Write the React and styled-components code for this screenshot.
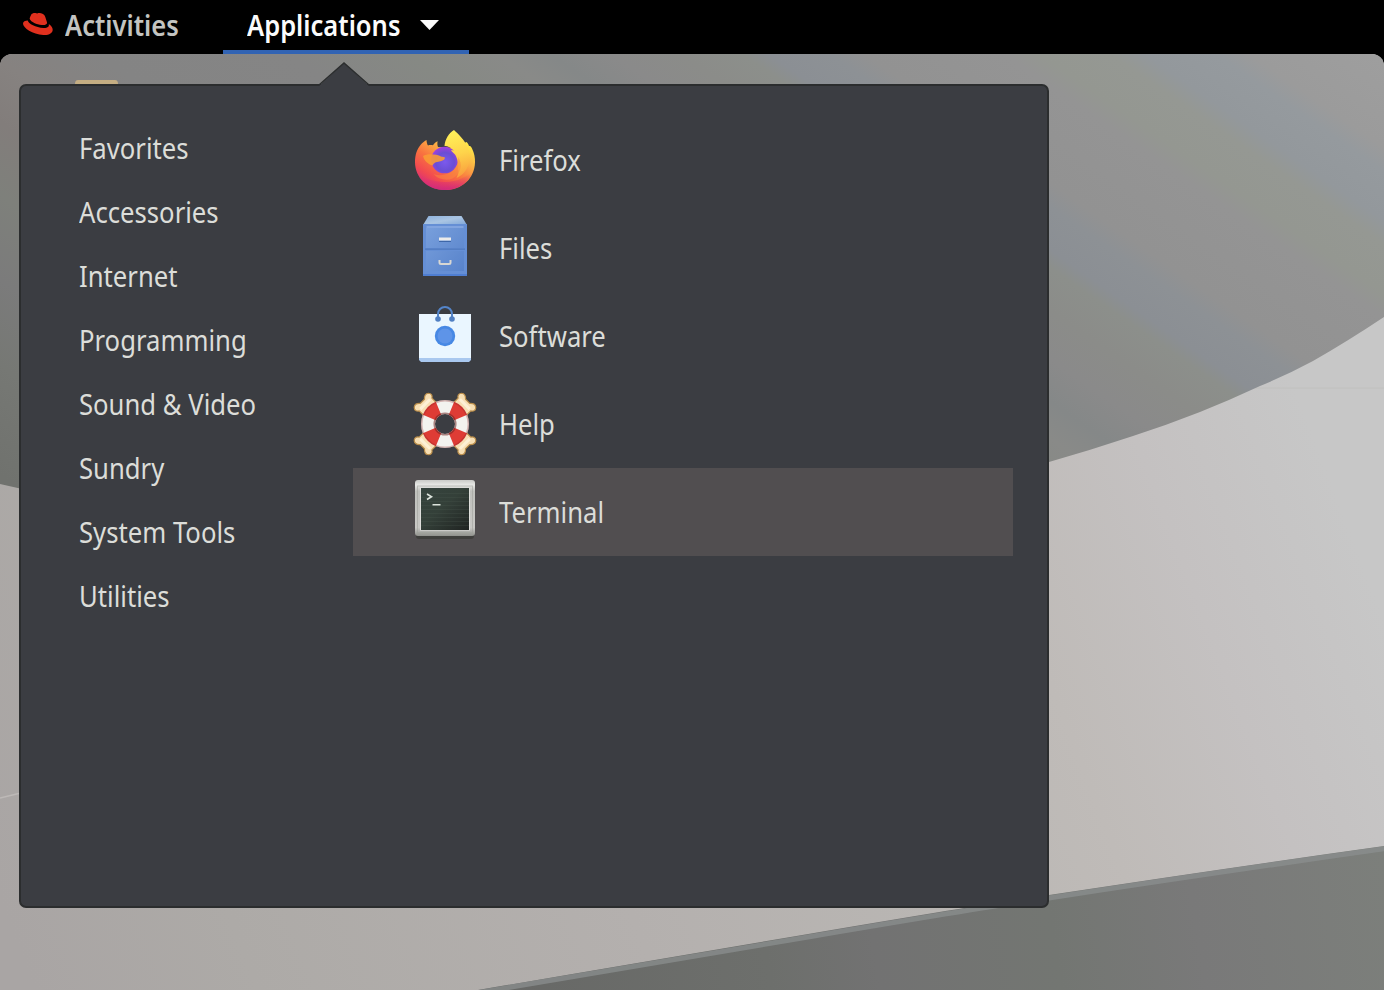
import React from "react";
import styled, { createGlobalStyle } from "styled-components";

const GlobalStyle = createGlobalStyle`
  * { box-sizing: border-box; }
  body { margin: 0; background: #000; overflow: hidden; }
`;

const Screen = styled.div`
  width: 1384px;
  height: 990px;
  display: flex;
  flex-direction: column;
  background: #000;
  font-family: "Noto Sans", "Open Sans", sans-serif;
  overflow: hidden;
`;

const TopBar = styled.header`
  height: 54px;
  flex: none;
  display: flex;
  align-items: stretch;
  background: #000;
`;

const BarButton = styled.div`
  display: flex;
  align-items: center;
  width: ${(p) => p.$width}px;
  padding-left: ${(p) => p.$inset}px;
  padding-bottom: ${(p) => (p.$active ? 0 : 4)}px;
  color: ${(p) => (p.$active ? "#fbfbfb" : "#c3c4c1")};
  border-bottom: ${(p) => (p.$active ? "4px solid #3163b3" : "none")};
`;

const Label = styled.span`
  display: block;
  flex: none;
  white-space: nowrap;
  width: ${(p) => (p.$width ? `${p.$width}px` : "auto")};
  font-size: ${(p) => p.$size || 29}px;
  font-weight: ${(p) => p.$weight || 400};
  line-height: 40px;
  transform: scaleX(${(p) => p.$scale || 0.885});
  transform-origin: 0 50%;
`;

const Desktop = styled.main`
  position: relative;
  flex: 1;
  border-radius: 12px 12px 0 0;
  overflow: hidden;
  padding: 30px 0 0 19px;
`;

const Wallpaper = styled.svg`
  position: absolute;
  inset: 0;
`;

const Pointer = styled.svg`
  position: absolute;
  left: 318px;
  top: 7px;
  z-index: 2;
`;

const Menu = styled.section`
  position: relative;
  width: 1030px;
  height: 824px;
  display: flex;
  padding: 30px 34px 0 32px;
  background: #3b3d42;
  border: 2px solid #2b2d2e;
  border-radius: 7px;
  color: #dcddd9;
`;

const Categories = styled.nav`
  width: 300px;
  display: flex;
  flex-direction: column;
`;

const Category = styled.div`
  height: 64px;
  display: flex;
  align-items: center;
  padding-left: 26px;
`;

const AppList = styled.div`
  width: 660px;
  display: flex;
  flex-direction: column;
`;

const AppRow = styled.div`
  height: 88px;
  display: flex;
  align-items: center;
  gap: 22px;
  padding-left: 60px;
  background: ${(p) => (p.$selected ? "#514e50" : "transparent")};
`;

const Icon = styled.svg`
  flex: none;
  display: block;
`;

function RedHat() {
  return (
    <Icon width="32" height="26" viewBox="0 0 32 26">
      <path fill="#e0301e" d="M9.4 2.3C10.3 1.2 12 .6 13.4 1c1.100.3 1.700.8 3 .1 1.900-.7 5 .5 6.200 2.400 1 1.700 1.600 4.500 2.400 6.700.6 2-1.800 3.100-5.300 2.800C14.600 12.500 9 9.900 7.700 6.900c-.2-.7 1-3.400 1.700-4.600z" />
      <path fill="#e0301e" d="M5.800 8.600C3.200 8.700 1 9.600 1 11.800c0 4 9.600 10.600 20.300 11.200 6 .3 9.200-2 9.400-5 .1-2.200-1.500-4.300-4-6 .9 2.500-1 4.200-5.400 4C14 15.700 6.200 12 5.800 8.600z" />
    </Icon>
  );
}

function Firefox() {
  return (
    <Icon width="64" height="64" viewBox="0 0 64 64">
      <defs>
        <linearGradient id="ffBody" x1="50" y1="10" x2="17" y2="60" gradientUnits="userSpaceOnUse">
          <stop offset="0" stopColor="#fff04a" />
          <stop offset=".3" stopColor="#fbb544" />
          <stop offset=".58" stopColor="#f9733f" />
          <stop offset=".82" stopColor="#f24a50" />
          <stop offset="1" stopColor="#d92f78" />
        </linearGradient>
        <linearGradient id="ffBase" x1="0" y1="46" x2="0" y2="62" gradientUnits="userSpaceOnUse">
          <stop offset="0" stopColor="#e7346c" stopOpacity="0" />
          <stop offset="1" stopColor="#cf2a7c" />
        </linearGradient>
        <radialGradient id="ffGlobe" cx="32" cy="34" r="17" gradientUnits="userSpaceOnUse">
          <stop offset="0" stopColor="#7b59ee" />
          <stop offset=".55" stopColor="#6a4ed4" />
          <stop offset="1" stopColor="#b43be0" />
        </radialGradient>
        <linearGradient id="ffFlame" x1="38" y1="2" x2="50" y2="50" gradientUnits="userSpaceOnUse">
          <stop offset="0" stopColor="#fff35a" />
          <stop offset=".5" stopColor="#fed44b" />
          <stop offset="1" stopColor="#f99a3c" />
        </linearGradient>
      </defs>
      <path fill="url(#ffBody)" d="M13.500 12c.2 2.300.5 4.200 1.500 5.500 1.800-.5 3.100-.5 4.900-.2 1-1.500 2.500-3 4.700-4-.5 2.400-.2 4.200.4 5.700l14 1 10-4 4.500-2c1.100 1 2 2.400 2.500 4 1-.2 2 .3 3 2.400 2.300 5 3.200 9.200 3 14C61.500 50.500 49 62 32 62 15 62 2 50 2 34c0-7 2-13.200 5.700-17.300C9.300 15 12 12.600 13.500 12z" />
      <path fill="url(#ffBase)" d="M3 42c7 8 17 12 29 12s22-5 28.500-13C57 54 46 62 32 62 17 62 6 53 3 42z" />
      <circle cx="31.500" cy="32" r="13.300" fill="url(#ffGlobe)" />
      <path fill="url(#ffFlame)" d="M41 2c3.500 3.500 11 9.500 13.500 18 5 12 .5 25-11 30 2-4 2.500-7 1.500-9 1-4-.4-10.500-3-14.500l-4-4c1-.3 2.200-.2 3.600.2C38 19 33 17.500 31.500 18 32 11 36 5 41 2z" />
      <path fill="#f99b35" fillOpacity=".9" d="M10 28c4-2.500 13-2 18.500.7 1 .3 2.800-.2 3.300.8.5 1.600-1.200 3-4.300 3.700-2.900.7-6.500.8-8 4.300C15.500 36.500 11.200 33 10 28z" />
      <path fill="#f98840" d="M45 29c5 7 3 17-5.500 21.500C34 53 25 51.500 20.500 46c7 2.500 15 1 20-4 4-4 5-8 4.500-13z" opacity=".55" />
    </Icon>
  );
}

function Files() {
  return (
    <Icon width="64" height="64" viewBox="0 0 64 64">
      <defs>
        <linearGradient id="fTop" x1="0" y1="0" x2="1" y2="1">
          <stop offset="0" stopColor="#8db1dc" />
          <stop offset=".5" stopColor="#aac5e3" />
          <stop offset="1" stopColor="#7fa6d8" />
        </linearGradient>
        <linearGradient id="fDrawer" x1="0" y1="0" x2="1" y2="1">
          <stop offset="0" stopColor="#789fdc" />
          <stop offset="1" stopColor="#5883cb" />
        </linearGradient>
      </defs>
      <path fill="url(#fTop)" d="M15.500 0h33l5.500 9H10z" />
      <path fill="#658fd5" d="M10 8h44v52H10z" />
      <path fill="#82a5e0" d="M13.500 10h37v2h-37z" />
      <path fill="url(#fDrawer)" d="M13 12h38v20H13zM13 35h38v20H13z" />
      <path fill="#4f79bd" d="M12 32.500h40v1.300H12z" />
      <path fill="#4f7ed1" d="M10 58h44v2H10z" />
      <path fill="#ecebea" d="M26 21.500h12v3H26z" />
      <path fill="none" stroke="#3e67a9" strokeWidth="1" d="M26 25.500h12" />
      <path fill="none" stroke="#d8d7d3" strokeWidth="2" d="M26.500 44v2.500q0 1.500 1.500 1.500h8q1.500 0 1.500-1.500V44" />
    </Icon>
  );
}

function Software() {
  return (
    <Icon width="64" height="64" viewBox="0 0 64 64">
      <path fill="#a9c8ef" d="M6 50h52v6l-2 2H8l-2-2z" />
      <path fill="#eaf6ff" d="M6 10h52v44H6z" />
      <g fill="none" stroke="#5485ca" strokeWidth="2">
        <path d="M25 14V10a7 7 0 0 1 14 0v4" />
      </g>
      <circle cx="25" cy="15" r="2.800" fill="#507fc2" />
      <circle cx="39" cy="15" r="2.800" fill="#507fc2" />
      <circle cx="32" cy="32" r="10.200" fill="#4788e4" />
      <circle cx="32" cy="32" r="7.500" fill="#5e94e8" />
    </Icon>
  );
}

function Help() {
  return (
    <Icon width="64" height="64" viewBox="0 0 64 64">
      {[45, 135, 225, 315].map((a) => (
        <g key={a} transform={`rotate(${a} 32 32)`}>
          <path
            fill="#f7dfb4"
            stroke="#b98d4a"
            strokeWidth="1.200"
            d="M23 11V4.500C20.500 3 20 .5 22-1.500c3-2.500 5.500-.2 7 1.500h6c1.500-1.700 4-4 7-1.500 2 2 1.500 4.500-1 6V11z"
          />
          <path fill="#fdf0d5" d="M25 2.500h14v3H25z" />
        </g>
      ))}
      <circle cx="32" cy="32" r="17" fill="none" stroke="#f3f3ef" strokeWidth="14" />
      <g fill="none" stroke="#de3c35" strokeWidth="14">
        {[45, 135, 225, 315].map((a) => (
          <path key={a} d="M25.500 16.300A17 17 0 0 1 38.500 16.300" transform={`rotate(${a} 32 32)`} />
        ))}
      </g>
      <circle cx="32" cy="32" r="23.300" fill="none" stroke="#8f2424" strokeOpacity=".3" strokeWidth="1.500" />
      <circle cx="32" cy="32" r="10.800" fill="none" stroke="#6b2422" strokeOpacity=".55" strokeWidth="1.500" />
    </Icon>
  );
}

function Terminal() {
  return (
    <Icon width="64" height="64" viewBox="0 0 64 64">
      <defs>
        <linearGradient id="tFrame" x1="0" y1="0" x2="0" y2="1">
          <stop offset="0" stopColor="#c9cac7" />
          <stop offset=".09" stopColor="#e9e9e7" />
          <stop offset=".2" stopColor="#bfc0bc" />
          <stop offset=".85" stopColor="#c8c8c5" />
          <stop offset="1" stopColor="#8f918c" />
        </linearGradient>
        <linearGradient id="tScreen" x1="0" y1="0" x2="1" y2="1">
          <stop offset="0" stopColor="#35433d" />
          <stop offset=".45" stopColor="#344039" />
          <stop offset="1" stopColor="#202422" />
        </linearGradient>
      </defs>
      <rect x="3" y="3" width="58" height="56" rx="3" fill="#333631" opacity=".6" />
      <rect x="2" y="0" width="60" height="56" rx="3" fill="url(#tFrame)" />
      <rect x="4.500" y="6" width="55" height="47" fill="none" stroke="#999b96" strokeOpacity=".5" />
      <rect x="7" y="7.500" width="50" height="43" fill="#dededb" />
      <rect x="8" y="8" width="48" height="42" fill="url(#tScreen)" />
      <g stroke="#526158" strokeOpacity=".22">
        {[13, 17, 21, 25, 29, 33, 37, 41, 45].map((y) => (
          <path key={y} d={`M8 ${y}.500H56`} />
        ))}
      </g>
      <path fill="none" stroke="#dce3dc" strokeWidth="1.600" d="M14 14l4.500 2.700L14 19.500M19.500 24.700h8" />
    </Icon>
  );
}

const stop = (t, color) => <stop key={t} offset={(t + 400) / 1150} stopColor={color} />;

function Backdrop() {
  return (
    <Wallpaper width="1384" height="936" viewBox="0 54 1384 936">
      <defs>
        <linearGradient id="wLight" x1="0" y1="900" x2="1300" y2="400" gradientUnits="userSpaceOnUse">
          <stop offset="0" stopColor="#a9a5a4" />
          <stop offset=".15" stopColor="#adaaa7" />
          <stop offset=".42" stopColor="#b4b0ae" />
          <stop offset=".62" stopColor="#b9b6b3" />
          <stop offset=".76" stopColor="#bfbbb8" />
          <stop offset=".88" stopColor="#c4c1c1" />
          <stop offset="1" stopColor="#c7c7c7" />
        </linearGradient>
        <linearGradient id="wDisc" x1="-228" y1="328" x2="427.500" y2="-615" gradientUnits="userSpaceOnUse">
          {[
            [-390, "#70726e"], [-300, "#767874"], [-230, "#7b7b7b"], [-160, "#7e807b"],
            [-100, "#827d7b"], [-50, "#868280"], [10, "#848484"], [120, "#858585"],
            [190, "#868984"], [240, "#898a88"], [270, "#858888"], [305, "#8a8a8a"],
            [345, "#8b8c89"], [380, "#8c8f8b"], [395, "#8b8f94"], [430, "#8d9195"],
            [450, "#929292"], [530, "#949494"], [550, "#949791"], [590, "#959893"],
            [610, "#93989c"], [650, "#959a9e"], [670, "#9b9b9b"], [740, "#9e9e9e"],
          ].map(([t, c]) => stop(t, c))}
        </linearGradient>
        <linearGradient id="wHill" x1="500" y1="990" x2="1384" y2="850" gradientUnits="userSpaceOnUse">
          <stop offset="0" stopColor="#676866" />
          <stop offset=".3" stopColor="#6d6f6c" />
          <stop offset=".42" stopColor="#727272" />
          <stop offset=".62" stopColor="#737672" />
          <stop offset=".78" stopColor="#797979" />
          <stop offset="1" stopColor="#7c7f7b" />
        </linearGradient>
      </defs>
      <path fill="url(#wLight)" d="M0 54h1384v936H0z" />
      <path fill="none" stroke="#bdb9b7" strokeWidth="1.500" d="M0 798l25-6" />
      <path fill="none" stroke="#c0c0be" strokeWidth="1" d="M1255 388h129" />
      <path fill="url(#wDisc)" d="M0 54h1384v263q-36 24-71 44-26 14-53 25-30 14-60 26-33 13-67 24-42 14-84 26Q600 600 20 488.500L0 484z" />
      <path fill="url(#wHill)" d="M478 990Q637 963 814 933T1049 895Q1226 868 1384 846V990z" />
      <path fill="none" stroke="#8b8f8f" strokeWidth="5" strokeOpacity=".75" d="M470 994Q637 966 814 936T1049 898Q1226 871 1390 848" />
      <path fill="#c5ae83" d="M75 84q0-4 3-4h37q3 0 3 4z" />
    </Wallpaper>
  );
}

const categories = [
  ["Favorites"],
  ["Accessories"],
  ["Internet"],
  ["Programming"],
  ["Sound & Video"],
  ["Sundry"],
  ["System Tools"],
  ["Utilities"],
];

const apps = [
  { name: "Firefox", Glyph: Firefox },
  { name: "Files", Glyph: Files },
  { name: "Software", Glyph: Software },
  { name: "Help", Glyph: Help },
  { name: "Terminal", Glyph: Terminal, selected: true },
];

export default function App() {
  return (
    <Screen>
      <GlobalStyle />
      <TopBar>
        <BarButton $width={223} $inset={22}>
          <RedHat />
          <Label $weight={600} $scale={0.88} style={{ marginLeft: 11 }}>Activities</Label>
        </BarButton>
        <BarButton $width={246} $inset={24} $active>
          <Label $weight={600} $scale={0.88} $width={173}>Applications</Label>
          <Icon width="20" height="12" viewBox="0 0 20 12">
            <path fill="#fbfbfb" d="M0 1h19L9.500 11z" />
          </Icon>
        </BarButton>
      </TopBar>
      <Desktop>
        <Backdrop />
        <Pointer width="52" height="26" viewBox="0 0 52 26">
          <path fill="#3b3d42" d="M0 26L2 24 26 2 50 24 52 26z" />
          <path fill="none" stroke="#2b2d2e" strokeWidth="1.500" d="M1 24L26 2 51 24" />
        </Pointer>
        <Menu>
          <Categories>
            {categories.map(([name, scale]) => (
              <Category key={name}>
                <Label $scale={scale}>{name}</Label>
              </Category>
            ))}
          </Categories>
          <AppList>
            {apps.map(({ name, Glyph, selected, scale }) => (
              <AppRow key={name} $selected={selected}>
                <Glyph />
                <Label $scale={scale}>{name}</Label>
              </AppRow>
            ))}
          </AppList>
        </Menu>
      </Desktop>
    </Screen>
  );
}
